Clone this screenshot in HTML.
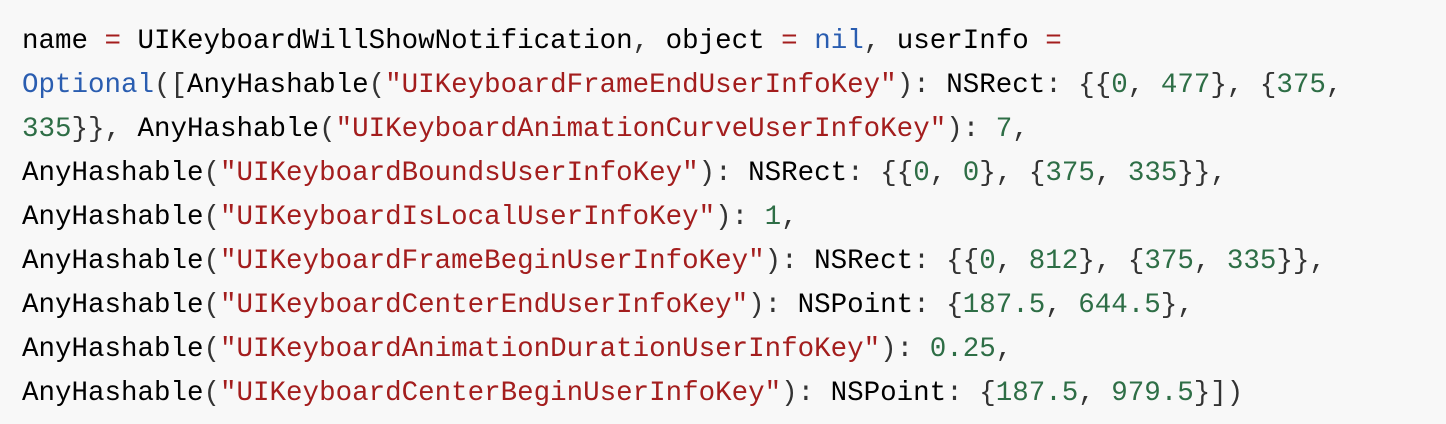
<!DOCTYPE html>
<html><head><meta charset="utf-8"><style>
html,body{margin:0;padding:0;background:#f8f8f8;width:1446px;height:424px;overflow:hidden}
pre{margin:0;position:absolute;left:22px;top:20px;font-family:"Liberation Mono","DejaVu Sans Mono",monospace;font-size:27.5px;line-height:44px;color:#000;white-space:pre}
pre span{font-family:inherit}
.o{color:#a31d1d}.s{color:#a31d1d}.b{color:#2a5db0}.n{color:#2e6e46}.p{color:#333}
</style></head><body><pre>name <span class="o">=</span> UIKeyboardWillShowNotification<span class="p">,</span> object <span class="o">=</span> <span class="b">nil</span><span class="p">,</span> userInfo <span class="o">=</span>
<span class="b">Optional</span><span class="p">([</span>AnyHashable<span class="p">(</span><span class="s">"UIKeyboardFrameEndUserInfoKey"</span><span class="p">):</span> NSRect<span class="p">:</span> <span class="p">{{</span><span class="n">0</span><span class="p">,</span> <span class="n">477</span><span class="p">},</span> <span class="p">{</span><span class="n">375</span><span class="p">,</span>
<span class="n">335</span><span class="p">}},</span> AnyHashable<span class="p">(</span><span class="s">"UIKeyboardAnimationCurveUserInfoKey"</span><span class="p">):</span> <span class="n">7</span><span class="p">,</span>
AnyHashable<span class="p">(</span><span class="s">"UIKeyboardBoundsUserInfoKey"</span><span class="p">):</span> NSRect<span class="p">:</span> <span class="p">{{</span><span class="n">0</span><span class="p">,</span> <span class="n">0</span><span class="p">},</span> <span class="p">{</span><span class="n">375</span><span class="p">,</span> <span class="n">335</span><span class="p">}},</span>
AnyHashable<span class="p">(</span><span class="s">"UIKeyboardIsLocalUserInfoKey"</span><span class="p">):</span> <span class="n">1</span><span class="p">,</span>
AnyHashable<span class="p">(</span><span class="s">"UIKeyboardFrameBeginUserInfoKey"</span><span class="p">):</span> NSRect<span class="p">:</span> <span class="p">{{</span><span class="n">0</span><span class="p">,</span> <span class="n">812</span><span class="p">},</span> <span class="p">{</span><span class="n">375</span><span class="p">,</span> <span class="n">335</span><span class="p">}},</span>
AnyHashable<span class="p">(</span><span class="s">"UIKeyboardCenterEndUserInfoKey"</span><span class="p">):</span> NSPoint<span class="p">:</span> <span class="p">{</span><span class="n">187.5</span><span class="p">,</span> <span class="n">644.5</span><span class="p">},</span>
AnyHashable<span class="p">(</span><span class="s">"UIKeyboardAnimationDurationUserInfoKey"</span><span class="p">):</span> <span class="n">0.25</span><span class="p">,</span>
AnyHashable<span class="p">(</span><span class="s">"UIKeyboardCenterBeginUserInfoKey"</span><span class="p">):</span> NSPoint<span class="p">:</span> <span class="p">{</span><span class="n">187.5</span><span class="p">,</span> <span class="n">979.5</span><span class="p">}])</span></pre></body></html>
